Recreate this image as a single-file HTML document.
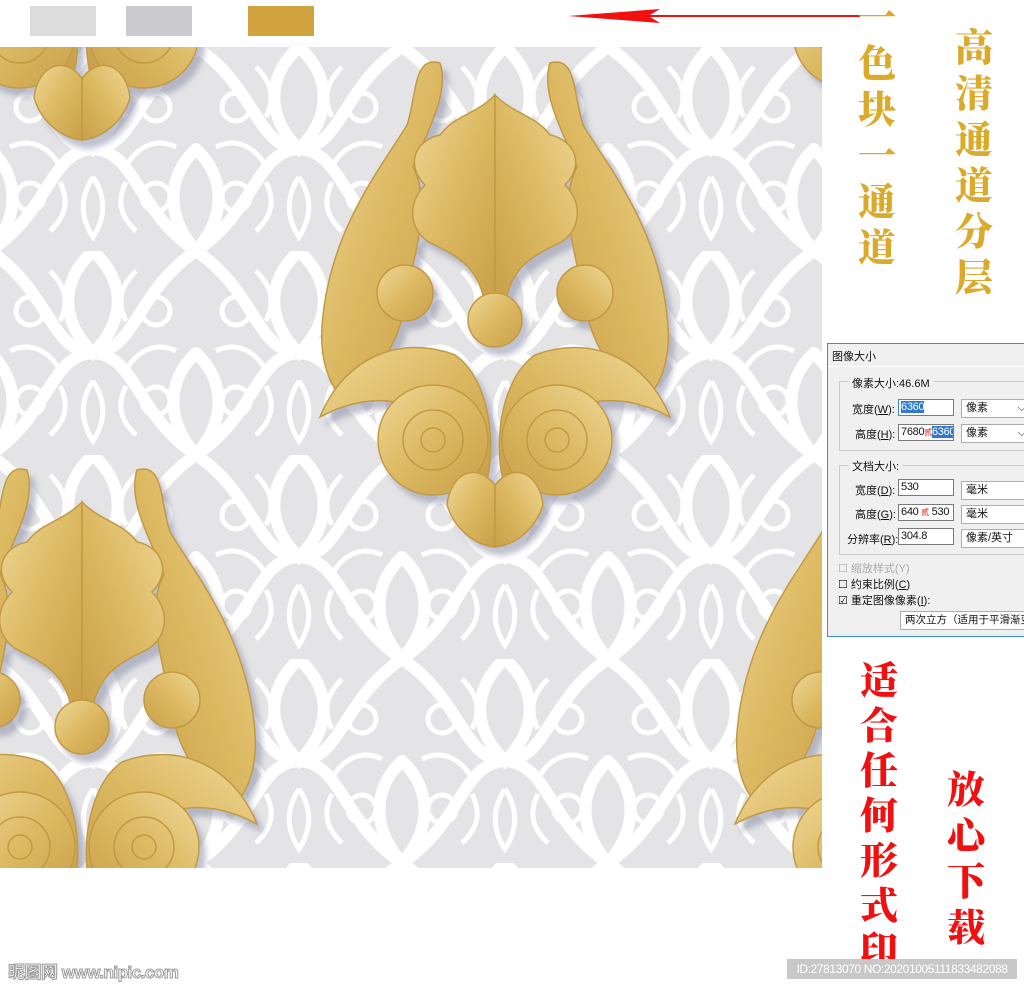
<!DOCTYPE html>
<html><head><meta charset="utf-8"><style>
body{margin:0;width:1024px;height:989px;background:#fff;position:relative;overflow:hidden;font-family:"Liberation Sans","Noto Sans CJK SC",sans-serif}
.sw{position:absolute;top:6px;height:30px}
.v{position:absolute;font-family:"Noto Serif CJK SC","Noto Sans CJK SC",serif;font-weight:900;line-height:1}
.gold{color:#dcaa2a;font-size:38px}
.red{color:#f01010;font-size:38px}
.dlg{position:absolute;left:827px;top:343px;width:200px;height:292px;background:#f0f0f0;border:1px solid #3c8ad8;font-size:11px;color:#111;white-space:nowrap}
.dlg .t{position:absolute;left:4px;top:4px;font-size:11px}
.grp{position:absolute;border:1px solid #ccc}
.lbl{position:absolute;background:#f0f0f0;padding:0 3px}
.in{position:absolute;height:17px;background:#fff;border:1px solid #7a7a7a;line-height:15px;padding-left:2px;box-sizing:border-box;overflow:hidden;white-space:nowrap;letter-spacing:-0.3px}
.sel{position:absolute;height:19px;background:#fff;border:1px solid #adadad;line-height:17px;padding-left:4px;box-sizing:border-box;overflow:hidden;white-space:nowrap}
</style></head><body>
<div class="sw" style="left:30px;width:66px;background:#dcdcdc"></div>
<div class="sw" style="left:126px;width:66px;background:#cbcbcf"></div>
<div class="sw" style="left:248px;width:66px;background:#d0a33e"></div>
<svg style="position:absolute;left:565px;top:6px" width="300" height="20"><path d="M295,9 L80,9 L85,9 L95,3 L3,10 L95,17 L85,11 L295,11Z" fill="#f01010"/></svg>

<svg style="position:absolute;left:0;top:0" width="822" height="989">
<defs>
<pattern id="dm" width="206" height="204" patternUnits="userSpaceOnUse" x="-10" y="47">
<rect width="206" height="204" fill="#e4e4e6"/>
<g fill="none" stroke="#fff" stroke-width="12" stroke-linecap="round">
<path d="M0,0 C60,40 60,100 103,102 C146,100 146,40 206,0"/>
<path d="M0,204 C60,164 60,104 103,102 C146,104 146,164 206,204"/>
<path d="M103,0 C70,30 70,70 103,102 C136,70 136,30 103,0"/>
<path d="M0,102 C30,130 30,170 0,204 M206,102 C176,130 176,170 206,204"/>
</g>
<g fill="none" stroke="#fff" stroke-width="5">
<circle cx="40" cy="60" r="14"/><circle cx="166" cy="60" r="14"/><circle cx="40" cy="150" r="14"/><circle cx="166" cy="150" r="14"/>
<path d="M103,130 C90,150 90,170 103,190 C116,170 116,150 103,130"/>
<path d="M20,100 C40,90 60,100 70,120 M186,100 C166,90 146,100 136,120"/>
<path d="M60,20 C75,35 80,50 70,70 M146,20 C131,35 126,50 136,70 M60,184 C75,170 80,155 70,135 M146,184 C131,170 126,155 136,135"/>
</g>
</pattern>
<linearGradient id="gd" x1="0" y1="0" x2="1" y2="1"><stop offset="0" stop-color="#f0d897"/><stop offset=".5" stop-color="#dcb962"/><stop offset="1" stop-color="#c9a04a"/></linearGradient>
<filter id="sh"><feDropShadow dx="6" dy="8" stdDeviation="3" flood-color="#8d90a8" flood-opacity=".55"/></filter>
<g id="half" fill="url(#gd)" stroke="#c29a45" stroke-width="1.5">
<path d="M-55,8 C-82,0 -78,40 -88,70 C-112,110 -162,170 -172,260 C-177,300 -167,330 -152,342 C-122,322 -102,300 -92,260 C-82,200 -62,150 -82,112 C-70,80 -45,40 -55,8Z"/>
<path d="M-175,362 C-150,300 -92,280 -40,300 C-8,322 2,382 -8,425 L-38,402 C-60,342 -120,332 -175,362Z"/>
<circle cx="-62" cy="385" r="55"/>
<circle cx="-62" cy="385" r="30" fill="none"/><circle cx="-62" cy="385" r="12" fill="none"/>
<circle cx="-90" cy="238" r="28"/>
<path d="M0,40 C-20,60 -40,60 -55,80 C-80,85 -90,110 -70,130 C-90,150 -85,180 -60,190 C-40,200 -20,210 -12,240 L0,245Z"/>
<path d="M0,430 C-20,405 -45,420 -48,450 C-40,475 -20,490 0,492Z"/>
</g>
<g id="orn" filter="url(#sh)">
<use href="#half"/><use href="#half" transform="scale(-1,1)"/>
<circle cx="0" cy="265" r="27" fill="url(#gd)" stroke="#c29a45" stroke-width="1.5"/>
</g>
<clipPath id="cp"><rect x="0" y="47" width="822" height="821"/></clipPath>
</defs>
<g clip-path="url(#cp)">
<rect x="0" y="47" width="822" height="821" fill="url(#dm)"/>
<use href="#orn" transform="translate(495,55)"/>
<use href="#orn" transform="translate(82,462)"/>
<use href="#orn" transform="translate(910,462)"/>
<use href="#orn" transform="translate(82,-352)"/>
<use href="#orn" transform="translate(910,-352)"/>
</g>
</svg>

<div class="v gold" style="left:858px;top:-4px;width:40px">一<br><span style="display:block;margin-top:8px">色</span><span style="display:block;margin-top:8px">块</span><span style="display:block;margin-top:8px">一</span><span style="display:block;margin-top:8px">通</span><span style="display:block;margin-top:8px">道</span></div>
<div class="v gold" style="left:955px;top:22px;width:40px;line-height:46px">高<br>清<br>通<br>道<br>分<br>层</div>
<div class="v red" style="left:860px;top:655px;width:40px;line-height:45px">适<br>合<br>任<br>何<br>形<br>式<br>印</div>
<div class="v red" style="left:947px;top:764px;width:40px;line-height:46px">放<br>心<br>下<br>载</div>

<div class="dlg">
<div class="t">图像大小</div>
<div style="position:absolute;left:0;top:22px;width:200px;height:1px;background:#fff"></div>
<div class="grp" style="left:11px;top:37px;width:190px;height:68px"></div>
<div class="lbl" style="left:21px;top:31px">像素大小:46.6M</div>
<div style="position:absolute;left:24px;top:57px">宽度(<u>W</u>):</div>
<div class="in" style="left:70px;top:55px;width:56px;border-color:#3c8ad8"><span style="background:#3078d0;color:#fff">6360</span></div>
<div class="sel" style="left:133px;top:55px;width:70px">像素 <span style="float:right;margin-right:4px">⌵</span></div>
<div style="position:absolute;left:27px;top:82px">高度(<u>H</u>):</div>
<div class="in" style="left:70px;top:80px;width:56px">7680<span style="color:red;font-size:8px">贰</span><span style="background:#3078d0;color:#fff">6360</span></div>
<div class="sel" style="left:133px;top:80px;width:70px">像素 <span style="float:right;margin-right:4px">⌵</span></div>
<div class="grp" style="left:11px;top:121px;width:190px;height:88px"></div>
<div class="lbl" style="left:21px;top:114px">文档大小:</div>
<div style="position:absolute;left:27px;top:138px">宽度(<u>D</u>):</div>
<div class="in" style="left:70px;top:135px;width:56px">530</div>
<div class="sel" style="left:133px;top:137px;width:70px">毫米</div>
<div style="position:absolute;left:27px;top:162px">高度(<u>G</u>):</div>
<div class="in" style="left:70px;top:160px;width:56px">640 <span style="color:red;font-size:8px">贰</span> 530</div>
<div class="sel" style="left:133px;top:161px;width:70px">毫米</div>
<div style="position:absolute;left:19px;top:187px">分辨率(<u>R</u>):</div>
<div class="in" style="left:70px;top:184px;width:56px">304.8</div>
<div class="sel" style="left:133px;top:185px;width:70px">像素/英寸</div>
<div style="position:absolute;left:10px;top:216px;color:#aaa">☐ 缩放样式(Y)</div>
<div style="position:absolute;left:10px;top:232px">☐ 约束比例(<u>C</u>)</div>
<div style="position:absolute;left:10px;top:248px">☑ 重定图像像素(<u>I</u>):</div>
<div class="sel" style="left:72px;top:267px;width:130px;font-size:10.5px">两次立方（适用于平滑渐变</div>
</div>

<div style="position:absolute;left:8px;top:958px;font-size:17px;font-weight:bold;color:#fff;-webkit-text-stroke:1px #999;letter-spacing:-0.5px">昵图网 www.nipic.com</div>
<div style="position:absolute;left:787px;top:959px;width:230px;height:20px;background:#c8c8c8;color:#fff;font-size:12px;line-height:20px;text-align:center;letter-spacing:-0.4px">ID:27813070 NO:20201005111833482088</div>
</body></html>
